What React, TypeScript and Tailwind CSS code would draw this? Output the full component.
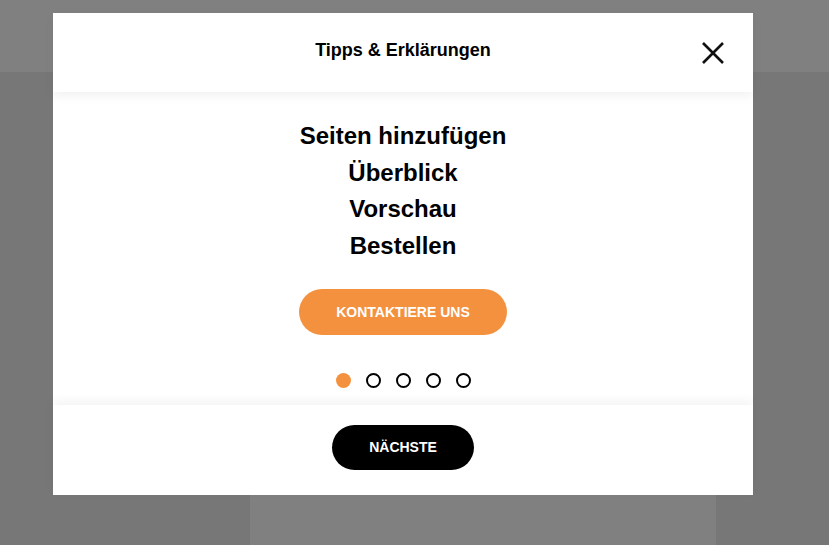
import React from "react";

export default function App() {
  return (
    <div
      className="relative w-[829px] h-[545px] overflow-hidden bg-[#777777]"
      style={{ fontFamily: '"Liberation Sans", Arial, sans-serif' }}
    >
      {/* dimmed page behind */}
      <div className="h-[72px] bg-[#808080]" />
      <div className="flex h-[473px]">
        <div className="w-[250px]" />
        <div className="w-[466px] bg-[#808080]" />
      </div>

      {/* modal */}
      <div className="absolute left-[53px] top-[13px] w-[700px] h-[482px] bg-white flex flex-col">
        <div className="relative z-10 h-[79px] flex items-center justify-center shadow-[0_4px_10px_rgba(0,0,0,0.06)] bg-white">
          <h2 className="text-[18px] font-bold text-black -mt-[5px]">Tipps &amp; Erklärungen</h2>
          <button className="absolute left-[648px] top-[28px] w-[24px] h-[24px] flex items-center justify-center">
            <svg width="24" height="24" viewBox="0 0 24 24">
              <path d="M2 2 L22 22 M22 2 L2 22" stroke="#111" strokeWidth="2.6" fill="none" />
            </svg>
          </button>
        </div>

        <div className="flex-1 flex flex-col items-center pt-[26px]">
          <div className="flex flex-col items-center text-[24px] leading-[36.5px] font-bold text-black">
            <div>Seiten hinzufügen</div>
            <div>Überblick</div>
            <div>Vorschau</div>
            <div>Bestellen</div>
          </div>
          <button className="mt-[25px] w-[208px] h-[46px] rounded-full bg-[#f4913f] text-white text-[14px] font-bold">
            KONTAKTIERE UNS
          </button>
          <div className="mt-[38px] flex gap-[15px]">
            <span className="w-[15px] h-[15px] rounded-full bg-[#f4913f]" />
            <span className="w-[15px] h-[15px] rounded-full border-2 border-black" />
            <span className="w-[15px] h-[15px] rounded-full border-2 border-black" />
            <span className="w-[15px] h-[15px] rounded-full border-2 border-black" />
            <span className="w-[15px] h-[15px] rounded-full border-2 border-black" />
          </div>
        </div>

        <div className="h-[90px] flex justify-center pt-[20px] shadow-[0_-4px_10px_rgba(0,0,0,0.05)] bg-white">
          <button className="w-[142px] h-[45px] rounded-full bg-black text-white text-[14px] font-bold">
            NÄCHSTE
          </button>
        </div>
      </div>
    </div>
  );
}
